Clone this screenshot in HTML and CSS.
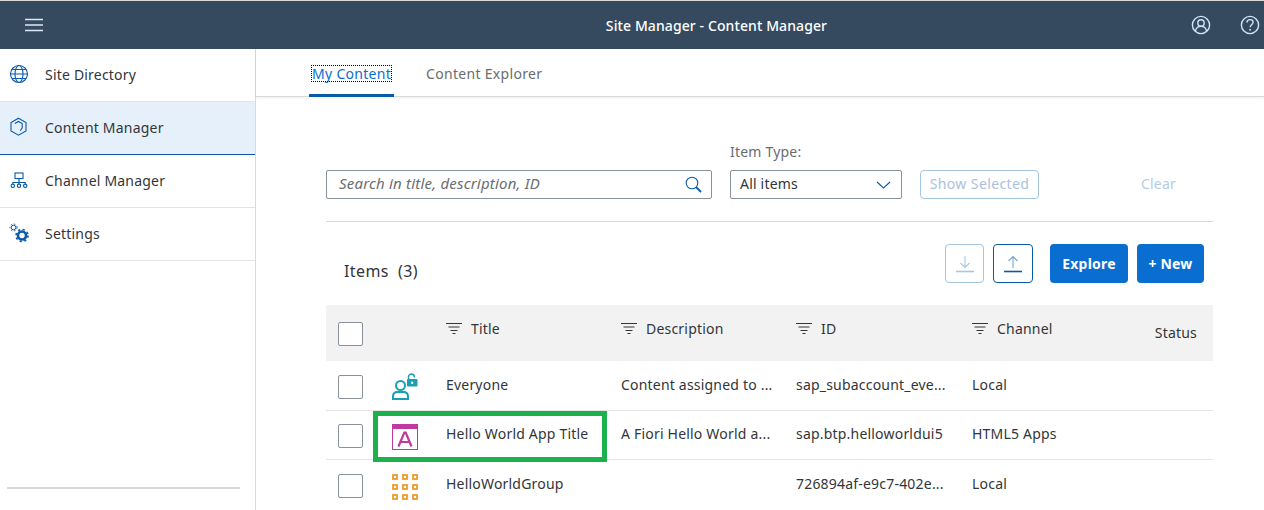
FILE: index.html
```html
<!DOCTYPE html>
<html lang="en">
<head>
    <meta charset="UTF-8">
    <meta name="viewport" content="width=device-width, initial-scale=1.0">
    <title>Site Manager - Content Manager</title>
    <link rel="stylesheet" href="styles.css">
</head>
<body>
    <header class="shell-bar">
        <button class="shell-menu" aria-label="Menu">
            <svg width="20" height="14" viewBox="0 0 20 14"><path d="M1 1.500h18M1 7h18M1 12.500h18" stroke="#d9e9fb" stroke-width="1.700" fill="none"/></svg>
        </button>
        <h1 class="shell-title">Site Manager - Content Manager</h1>
        <div class="shell-actions">
            <svg width="20" height="20" viewBox="0 0 20 20" fill="none" stroke="#cfe4fa" stroke-width="1.400"><circle cx="10" cy="10" r="8.600"/><circle cx="10" cy="8" r="3.200"/><path d="M4.400 16c.6-3 2.800-4.600 5.600-4.600s5 1.600 5.600 4.600"/></svg>
            <svg width="20" height="20" viewBox="0 0 20 20" fill="none" stroke="#cfe4fa" stroke-width="1.400"><circle cx="10" cy="10" r="8.600"/><path d="M7 7.600c0-1.800 1.300-3 3.100-3 1.700 0 3 1.100 3 2.700 0 2.400-3 2.500-3 5"/><path d="M10.100 14v1.600" stroke-width="1.700"/></svg>
        </div>
    </header>

    <div class="layout">
        <aside class="sidebar">
            <nav class="side-nav">
                <a class="side-item" href="#">
                    <svg class="side-icon" width="20" height="20" viewBox="0 0 20 20" fill="none" stroke="#0a5aa8" stroke-width="1.100"><circle cx="10" cy="10" r="8.500"/><ellipse cx="10" cy="10" rx="4" ry="8.500"/><path d="M1.500 10h17M2.800 5.500h14.400M2.800 14.500h14.400"/></svg>
                    <span>Site Directory</span>
                </a>
                <a class="side-item side-item-active" href="#">
                    <svg class="side-icon" width="20" height="20" viewBox="0 0 20 20" fill="none" stroke="#0a5aa8" stroke-width="1.100"><path d="M9.500 1.200L17 5.500V14l-7.500 4.200L2 14V5.500z"/><path d="M5.800 6.500l3.700-2.100 3.700 2.100v4.300l-2 3"/></svg>
                    <span>Content Manager</span>
                </a>
                <a class="side-item" href="#">
                    <svg class="side-icon" width="20" height="20" viewBox="0 0 20 20" fill="none" stroke="#0a5aa8" stroke-width="1.100"><rect x="6" y="3" width="8" height="5.500"/><path d="M10 8.500v4M3.800 14v-1.500h12.400V14M10 12.500V14"/><circle cx="3.800" cy="15.800" r="1.700"/><circle cx="10" cy="15.800" r="1.700"/><circle cx="16.200" cy="15.800" r="1.700"/></svg>
                    <span>Channel Manager</span>
                </a>
                <a class="side-item" href="#">
                    <svg class="side-icon" width="20" height="20" viewBox="0 0 20 20" fill="none" stroke="#0a5aa8"><circle cx="13" cy="12.500" r="4" stroke-width="2.600"/><circle cx="13" cy="12.500" r="6" stroke-width="1.600" stroke-dasharray="2.200 2.500"/><circle cx="4.500" cy="4.500" r="2.300" stroke-width="1"/><circle cx="4.500" cy="4.500" r="3.500" stroke-width="1" stroke-dasharray="1.500 1.800"/></svg>
                    <span>Settings</span>
                </a>
            </nav>
            <div class="side-foot"></div>
        </aside>

        <main class="content">
            <div class="tabs">
                <a class="tab tab-active" href="#"><span class="tab-focus">My Content</span></a>
                <a class="tab" href="#">Content Explorer</a>
            </div>

            <section class="panel">
                <div class="filters">
                    <div class="search">
                        <span class="search-text">Search in title, description, ID</span>
                        <svg width="17" height="17" viewBox="0 0 17 17" fill="none" stroke="#0a5aa8"><circle cx="7" cy="7" r="5.800" stroke-width="1.100"/><path d="M11 11l5 5" stroke-width="1.800"/></svg>
                    </div>
                    <div class="type-field">
                        <label class="type-label">Item Type:</label>
                        <div class="select">
                            <span class="select-text">All items</span>
                            <svg width="15" height="8" viewBox="0 0 15 8" fill="none" stroke="#0a5aa8" stroke-width="1.100"><path d="M1 1l6.500 6L14 1"/></svg>
                        </div>
                    </div>
                    <button class="btn-show">Show Selected</button>
                    <button class="btn-clear">Clear</button>
                </div>

                <div class="items-bar">
                    <h2 class="items-title">Items&nbsp; (3)</h2>
                    <div class="items-actions">
                        <button class="icon-btn icon-btn-off">
                            <svg width="18" height="18" viewBox="0 0 18 18" fill="none" stroke="#a9c6e3"><path d="M9 1v11M4.500 8L9 12.500 13.500 8" stroke-width="1.100"/><path d="M0 16.500h18" stroke-width="1.600"/></svg>
                        </button>
                        <button class="icon-btn icon-btn-up">
                            <svg width="18" height="18" viewBox="0 0 18 18" fill="none"><path d="M9 13V2M4.500 6L9 1.500 13.500 6" stroke="#7ba3cc" stroke-width="1.100"/><path d="M0 16.500h18" stroke="#0a5aa8" stroke-width="1.600"/></svg>
                        </button>
                        <button class="btn-primary btn-explore">Explore</button>
                        <button class="btn-primary btn-new">+ New</button>
                    </div>
                </div>

                <div class="table">
                    <div class="row row-head">
                        <span class="check"></span>
                        <span></span>
                        <span class="head-cell">
                            <svg class="filter-icon" width="16" height="11" viewBox="0 0 16 11" stroke="#32363a"><path d="M0 .5h16M2.500 4h11M4.500 7.500h7M6.500 10.500h3"/></svg>Title
                        </span>
                        <span class="head-cell">
                            <svg class="filter-icon" width="16" height="11" viewBox="0 0 16 11" stroke="#32363a"><path d="M0 .5h16M2.500 4h11M4.500 7.500h7M6.500 10.500h3"/></svg>Description
                        </span>
                        <span class="head-cell">
                            <svg class="filter-icon" width="16" height="11" viewBox="0 0 16 11" stroke="#32363a"><path d="M0 .5h16M2.500 4h11M4.500 7.500h7M6.500 10.500h3"/></svg>ID
                        </span>
                        <span class="head-cell">
                            <svg class="filter-icon" width="16" height="11" viewBox="0 0 16 11" stroke="#32363a"><path d="M0 .5h16M2.500 4h11M4.500 7.500h7M6.500 10.500h3"/></svg>Channel
                        </span>
                        <span class="head-status">Status</span>
                    </div>

                    <div class="row">
                        <span class="check"></span>
                        <svg width="27" height="27" viewBox="0 0 27 27" fill="none" stroke="#1b9fb3" stroke-width="2"><circle cx="8.500" cy="12.500" r="4.500"/><path d="M1 26v-2.500c0-3 2-4.500 4.500-4.500h6c2.500 0 4.500 1.500 4.500 4.500V26z"/><path d="M16.500 6V4c0-4 6-4 6 .500" stroke-width="1.500"/><rect x="15" y="6" width="10.500" height="7.500" rx="1" fill="#1b9fb3" stroke="none"/><circle cx="20.200" cy="9.700" r="1.200" fill="#fff" stroke="none"/></svg>
                        <span>Everyone</span>
                        <span>Content assigned to ...</span>
                        <span>sap_subaccount_eve...</span>
                        <span>Local</span>
                    </div>

                    <div class="row row-app">
                        <span class="check"></span>
                        <svg width="26" height="26" viewBox="0 0 26 26" fill="none"><rect x=".5" y=".5" width="25" height="25" stroke="#c0399f"/><rect width="26" height="5" fill="#c0399f"/><path d="M6.500 22.500l5.800-14h1.400l5.800 14M8.600 18h8.800" stroke="#c0399f" stroke-width="2.200"/></svg>
                        <span>Hello World App Title</span>
                        <span>A Fiori Hello World a...</span>
                        <span>sap.btp.helloworldui5</span>
                        <span>HTML5 Apps</span>
                        <span class="highlight"></span>
                    </div>

                    <div class="row row-last">
                        <span class="check"></span>
                        <svg width="26" height="26" viewBox="0 0 26 26" fill="none" stroke="#ee9b2d" stroke-width="1.800"><rect x="1" y="1" width="4" height="4"/><rect x="11" y="1" width="4" height="4"/><rect x="21" y="1" width="4" height="4"/><rect x="1" y="11" width="4" height="4"/><rect x="11" y="11" width="4" height="4"/><rect x="21" y="11" width="4" height="4"/><rect x="1" y="21" width="4" height="4"/><rect x="11" y="21" width="4" height="4"/><rect x="21" y="21" width="4" height="4"/></svg>
                        <span>HelloWorldGroup</span>
                        <span></span>
                        <span>726894af-e9c7-402e...</span>
                        <span>Local</span>
                    </div>
                </div>
            </section>
        </main>
    </div>
</body>
</html>
```

FILE: styles.css
```css
html, body {
    height: 100%;
}

body {
    margin: 0;
    overflow: hidden;
    display: flex;
    flex-direction: column;
    font-family: "Noto Sans", "Open Sans", sans-serif;
    font-size: 14px;
    letter-spacing: 0.2px;
    color: #32363a;
    background-color: #fff;
    border-top: 1px solid #d9d9d9;
    box-sizing: border-box;
}

button {
    font-family: inherit;
    letter-spacing: inherit;
    cursor: pointer;
}

a {
    color: inherit;
    text-decoration: none;
}

.shell-bar {
    height: 48px;
    flex: none;
    display: flex;
    align-items: center;
    background-color: #354a5f;
    color: #fff;
}

.shell-menu {
    background: none;
    border: none;
    padding: 0;
    margin-left: 24px;
    height: 14px;
    line-height: 0;
}

.shell-title {
    flex: 1;
    margin: 0;
    padding-left: 198px;
    text-align: center;
    font-size: 14px;
    font-weight: 500;
    letter-spacing: 0.1px;
}

.shell-actions {
    display: flex;
    gap: 29px;
    margin-right: 4px;
}

.layout {
    flex: 1;
    display: flex;
    min-height: 0;
}

.sidebar {
    width: 255px;
    flex: none;
    border-right: 1px solid #d9d9d9;
    display: flex;
    flex-direction: column;
}

.side-nav {
    flex: 1;
}

.side-item {
    height: 50px;
    display: flex;
    align-items: center;
    padding: 0 0 2px 9px;
    border-bottom: 1px solid #e4e4e4;
}

.side-icon {
    margin-right: 16px;
}

.side-item-active {
    background-color: #e5f0fa;
    border-bottom-color: #0a5aa8;
}

.side-foot {
    height: 0;
    margin: 0 15px 21px 7px;
    border-bottom: 2px solid #d9d9d9;
}

.content {
    flex: 1;
    min-width: 0;
}

.tabs {
    height: 48px;
    display: flex;
    padding-left: 53px;
    gap: 32px;
    box-sizing: border-box;
    border-bottom: 1px solid #d9d9d9;
    box-shadow: 0 1px 2px rgba(0, 0, 0, 0.08);
    letter-spacing: 0.3px;
}

.tab {
    display: flex;
    align-items: center;
    height: 48px;
    color: #6a6d70;
    box-sizing: border-box;
}

.tab-active {
    color: #0a6ed1;
    padding: 3px 3px 0;
    border-bottom: 3px solid #0a5aa8;
}

.tab-focus {
    outline: 1px dotted #000;
    line-height: 15px;
}

.panel {
    width: 887px;
    margin-left: 70px;
}

.filters {
    display: flex;
    align-items: flex-end;
    padding-top: 46px;
    height: 56px;
    padding-bottom: 22px;
    border-bottom: 1px solid #d9d9d9;
}

.search {
    width: 386px;
    height: 29px;
    box-sizing: border-box;
    border: 1px solid #89919a;
    border-radius: 2px;
    display: flex;
    align-items: center;
    justify-content: space-between;
    padding: 0 9px 0 12px;
    margin-right: 18px;
}

.search-text {
    font-style: italic;
    font-size: 15px;
    color: #6a6d70;
    margin-bottom: 3px;
}

.type-field {
    margin-right: 18px;
}

.type-label {
    display: block;
    color: #6a6d70;
    line-height: 20px;
    margin-bottom: 8px;
}

.select {
    width: 172px;
    height: 29px;
    box-sizing: border-box;
    border: 1px solid #89919a;
    border-radius: 2px;
    display: flex;
    align-items: center;
    justify-content: space-between;
    padding: 0 10px 0 9px;
}

.select-text {
    margin-bottom: 2px;
}

.btn-show {
    width: 119px;
    height: 29px;
    padding: 0 0 2px;
    background: #fff;
    border: 1px solid #a3c6e3;
    border-radius: 4px;
    color: #a9c3dd;
    font-size: 14px;
    letter-spacing: 0.4px;
}

.btn-clear {
    margin-left: 102px;
    height: 29px;
    padding: 0 0 2px;
    background: none;
    border: none;
    color: #b3cde6;
    font-size: 14px;
}

.items-bar {
    display: flex;
    align-items: center;
    justify-content: space-between;
    padding: 22px 9px 22px 18px;
    height: 39px;
}

.items-title {
    margin: 15px 0 0;
    font-size: 16px;
    font-weight: 400;
    letter-spacing: 0.4px;
    color: #32363a;
}

.items-actions {
    display: flex;
    gap: 9px;
}

.icon-btn {
    width: 39px;
    height: 39px;
    padding: 0;
    background: #fff;
    border: 1px solid #0a5aa8;
    border-radius: 4px;
    line-height: 0;
}

.icon-btn-up {
    width: 40px;
}

.icon-btn-off {
    border-color: #a3c6e3;
}

.btn-primary {
    height: 39px;
    padding: 0;
    background-color: #0a6ed1;
    border: none;
    border-radius: 4px;
    color: #fff;
    font-size: 14px;
    font-weight: 700;
}

.btn-explore {
    width: 78px;
    margin-left: 8px;
}

.btn-new {
    width: 67px;
}

.row {
    display: grid;
    grid-template-columns: 65px 55px 175px 175px 176px 175px 1fr;
    align-items: center;
    position: relative;
    height: 50px;
    box-sizing: border-box;
    border-bottom: 1px solid #e4e4e4;
    white-space: nowrap;
}

.row > span {
    margin-top: -2px;
}

.row > svg {
    margin: 2px 0 0 1px;
}

.row > .check {
    margin: 2px 0 0 12px;
}

.row-head {
    height: 56px;
    background-color: #f2f2f2;
    border-bottom: none;
}

.row-app {
    height: 49px;
}

.row-app > span,
.row-last > span {
    margin-top: -3px;
}

.row-app > svg,
.row-last > svg {
    margin-top: 3px;
}

.row-last {
    border-bottom: none;
}

.check {
    width: 25px;
    height: 24px;
    box-sizing: border-box;
    background: #fff;
    border: 1px solid #89919a;
    border-radius: 2px;
}

.row > .head-cell {
    display: flex;
    align-items: center;
    margin-top: -9px;
}

.filter-icon {
    margin-right: 9px;
}

.row > .head-status {
    justify-self: end;
    margin: -2px 16px 0 0;
}

.row > .highlight {
    position: absolute;
    left: 47px;
    top: 0;
    width: 224px;
    height: 41px;
    margin: 0;
    border: 5px solid #1db14b;
}
```
